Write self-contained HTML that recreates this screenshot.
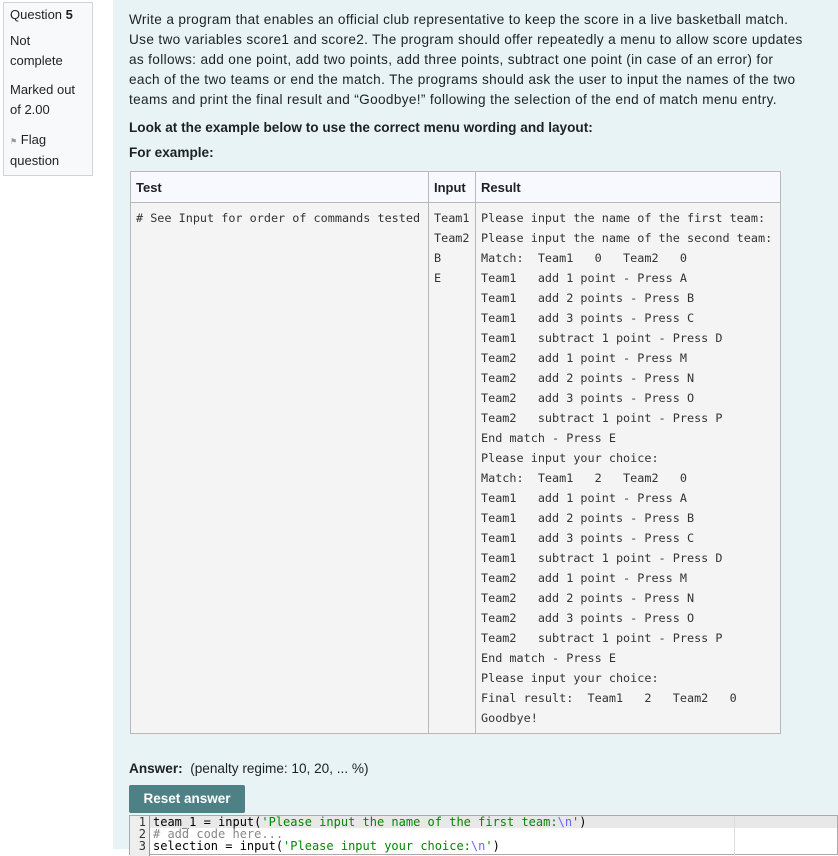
<!DOCTYPE html>
<html><head><meta charset="utf-8"><style>
*{margin:0;padding:0;box-sizing:border-box}
body{width:838px;height:849px;overflow:hidden;background:#fff;font-family:"Liberation Sans",sans-serif;color:#1d2125;position:relative}
.info{position:absolute;left:3px;top:2px;width:90px;height:174px;background:#f8f9fa;border:1px solid #cfd4d8;padding:2px 0 0 6px;font-size:13px;line-height:20px}
.content{position:absolute;left:113px;top:0;width:725px;height:849px;background:#e7f3f5}
.txt{position:absolute;left:16px;top:10px;width:705px;font-size:13.6px;line-height:20px;letter-spacing:0.35px;white-space:nowrap}
.b{font-weight:bold;letter-spacing:0}
table{position:absolute;left:17px;top:171px;border-collapse:collapse;font-size:13px;background:#f4f4f4}
th{background:#f8f9fe;text-align:left;height:31px;padding:0 5px;border:1px solid #b8b8b8}
td{border:1px solid #b8b8b8;vertical-align:top;padding:5px 3px 5px 5px;font-family:"DejaVu Sans Mono","Liberation Mono",monospace;font-size:11.8px;line-height:20px;color:#333;white-space:pre}
.ans{position:absolute;left:16px;top:761px;font-size:13.6px}
.btn{position:absolute;left:16px;top:785px;width:116px;height:28px;background:#4e8186;color:#fff;font-weight:bold;font-size:13.5px;line-height:28px;text-align:center;border-radius:2px}
.ed{position:absolute;left:16px;top:815px;width:709px;height:40px;background:#fff;border:1px solid #aaa;font-family:"DejaVu Sans Mono","Liberation Mono",monospace;font-size:12px;line-height:12px}
.gut{position:absolute;left:0;top:0;width:20px;height:40px;background:#eee;border-right:1px solid #999;text-align:right;padding-right:3px;color:#333}
.code{position:absolute;left:23px;top:0;white-space:pre;color:#000}
.s{color:#080}.c{color:#888}.e{color:#66f}
.l1{position:absolute;left:0;top:0;width:100%;height:12px;background:#e8e8e8}
.vl{position:absolute;left:604px;top:0;width:1px;height:40px;background:#ddd}
</style></head><body>
<div class="info">
<p style="margin-bottom:6px">Question <b>5</b></p>
<p style="margin-bottom:9px">Not<br>complete</p>
<p style="margin-bottom:10px">Marked out<br>of 2.00</p>
<p style="line-height:19px"><span style="font-size:8px;color:#999">&#9873;</span> Flag<br>question</p>
</div>
<div class="content">
<div class="txt">
Write a program that enables an official club representative to keep the score in a live basketball match.<br>
Use two variables score1 and score2. The program should offer repeatedly a menu to allow score updates<br>
as follows: add one point, add two points, add three points, subtract one point (in case of an error) for<br>
each of the two teams or end the match. The programs should ask the user to input the names of the two<br>
teams and print the final result and “Goodbye!” following the selection of the end of match menu entry.
<div class="b" style="margin-top:8px">Look at the example below to use the correct menu wording and layout:</div>
<div class="b" style="margin-top:5px">For example:</div>
</div>
<table>
<tr><th style="width:298px">Test</th><th style="width:47px">Input</th><th style="width:305px">Result</th></tr>
<tr><td># See Input for order of commands tested</td><td>Team1
Team2
B
E</td><td>Please input the name of the first team:
Please input the name of the second team:
Match:  Team1   0   Team2   0
Team1   add 1 point - Press A
Team1   add 2 points - Press B
Team1   add 3 points - Press C
Team1   subtract 1 point - Press D
Team2   add 1 point - Press M
Team2   add 2 points - Press N
Team2   add 3 points - Press O
Team2   subtract 1 point - Press P
End match - Press E
Please input your choice:
Match:  Team1   2   Team2   0
Team1   add 1 point - Press A
Team1   add 2 points - Press B
Team1   add 3 points - Press C
Team1   subtract 1 point - Press D
Team2   add 1 point - Press M
Team2   add 2 points - Press N
Team2   add 3 points - Press O
Team2   subtract 1 point - Press P
End match - Press E
Please input your choice:
Final result:  Team1   2   Team2   0
Goodbye!</td></tr>
</table>
<div class="ans"><b>Answer:</b> &nbsp;(penalty regime: 10, 20, ... %)</div>
<div class="btn">Reset answer</div>
<div class="ed"><div class="l1"></div><div class="vl"></div><div class="gut">1<br>2<br>3</div><div class="code">team_1 = input(<span class="s">'Please input the name of the first team:<span class="e">\n</span>'</span>)
<span class="c"># add code here...</span>
selection = input(<span class="s">'Please input your choice:<span class="e">\n</span>'</span>)</div></div>
</div>
</body></html>
